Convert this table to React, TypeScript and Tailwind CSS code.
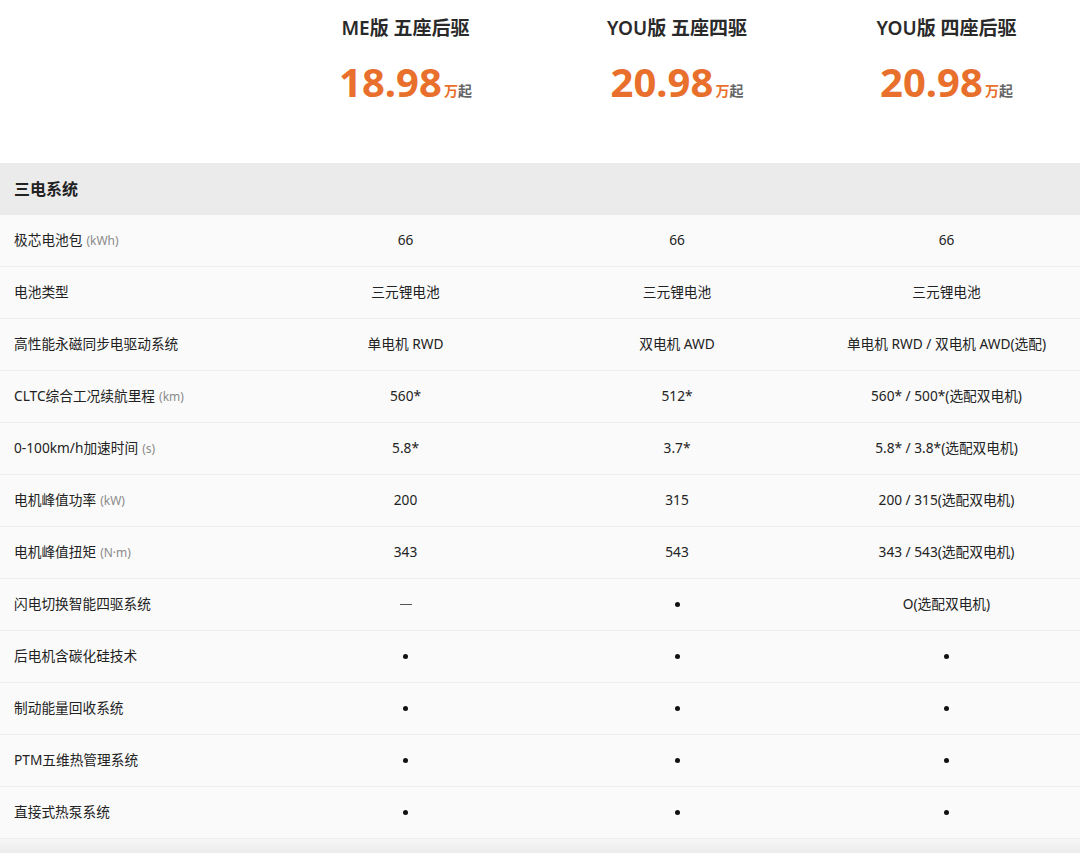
import React from 'react';

const models = [
  { name: 'ME版 五座后驱', price: '18.98' },
  { name: 'YOU版 五座四驱', price: '20.98' },
  { name: 'YOU版 四座后驱', price: '20.98' },
];

const rows: { label: string; unit?: string; values: string[] }[] = [
  { label: '极芯电池包', unit: '(kWh)', values: ['66', '66', '66'] },
  { label: '电池类型', values: ['三元锂电池', '三元锂电池', '三元锂电池'] },
  { label: '高性能永磁同步电驱动系统', values: ['单电机 RWD', '双电机 AWD', '单电机 RWD / 双电机 AWD(选配)'] },
  { label: 'CLTC综合工况续航里程', unit: '(km)', values: ['560*', '512*', '560* / 500*(选配双电机)'] },
  { label: '0-100km/h加速时间', unit: '(s)', values: ['5.8*', '3.7*', '5.8* / 3.8*(选配双电机)'] },
  { label: '电机峰值功率', unit: '(kW)', values: ['200', '315', '200 / 315(选配双电机)'] },
  { label: '电机峰值扭矩', unit: '(N·m)', values: ['343', '543', '343 / 543(选配双电机)'] },
  { label: '闪电切换智能四驱系统', values: ['—', '•', 'O(选配双电机)'] },
  { label: '后电机含碳化硅技术', values: ['•', '•', '•'] },
  { label: '制动能量回收系统', values: ['•', '•', '•'] },
  { label: 'PTM五维热管理系统', values: ['•', '•', '•'] },
  { label: '直接式热泵系统', values: ['•', '•', '•'] },
];

const Cell: React.FC<{ v: string }> = ({ v }) => {
  if (v === '•') return <span className="block w-[5px] h-[5px] rounded-full bg-[#111]" />;
  if (v === '—') return <span className="block w-[12px] h-[1.5px] bg-[#555]" />;
  return <span>{v}</span>;
};

export default function App() {
  return (
    <div
      className="w-[1080px] h-[853px] overflow-hidden bg-white text-[#222]"
      style={{ fontFamily: '"Noto Sans", "Noto Sans CJK SC", sans-serif' }}
    >
      {/* model header */}
      <div className="grid grid-cols-[270px_271px_272px_267px] h-[163px]">
        <div />
        {models.map((m, i) => (
          <div key={i} className="flex flex-col items-center pt-[12px]">
            <div className="text-[19px] font-semibold text-[#2a2a2a] leading-[32px]">{m.name}</div>
            <div className="flex items-end mt-[16px]">
              <span className="text-[40px] font-bold text-[#e8702c] leading-[44px]">{m.price}</span>
              <span className="text-[14px] font-bold text-[#e8702c] leading-[20px] ml-[2px] mb-[3px]">万</span>
              <span className="text-[14px] font-semibold text-[#666] leading-[20px] mb-[3px]">起</span>
            </div>
          </div>
        ))}
      </div>

      {/* section title */}
      <div className="h-[52px] bg-[#ebebeb] flex items-center px-[14px]">
        <span className="text-[16px] font-bold text-[#222]">三电系统</span>
      </div>

      {rows.map((r, i) => (
        <div
          key={i}
          className="grid grid-cols-[270px_271px_272px_267px] h-[52px] bg-[#fafafa] border-b border-[#eeeeee] text-[13.7px]"
        >
          <div className="flex items-center pl-[14px] whitespace-nowrap">
            <span className="text-[#222]">{r.label}</span>
            {r.unit && <span className="ml-[4px] text-[12px] text-[#8a8a8a]">{r.unit}</span>}
          </div>
          {r.values.map((v, j) => (
            <div key={j} className="flex items-center justify-center text-[#222] whitespace-nowrap">
              <Cell v={v} />
            </div>
          ))}
        </div>
      ))}

      <div className="h-[14px] bg-gradient-to-b from-[#f7f7f7] to-[#ececec]" />
    </div>
  );
}
